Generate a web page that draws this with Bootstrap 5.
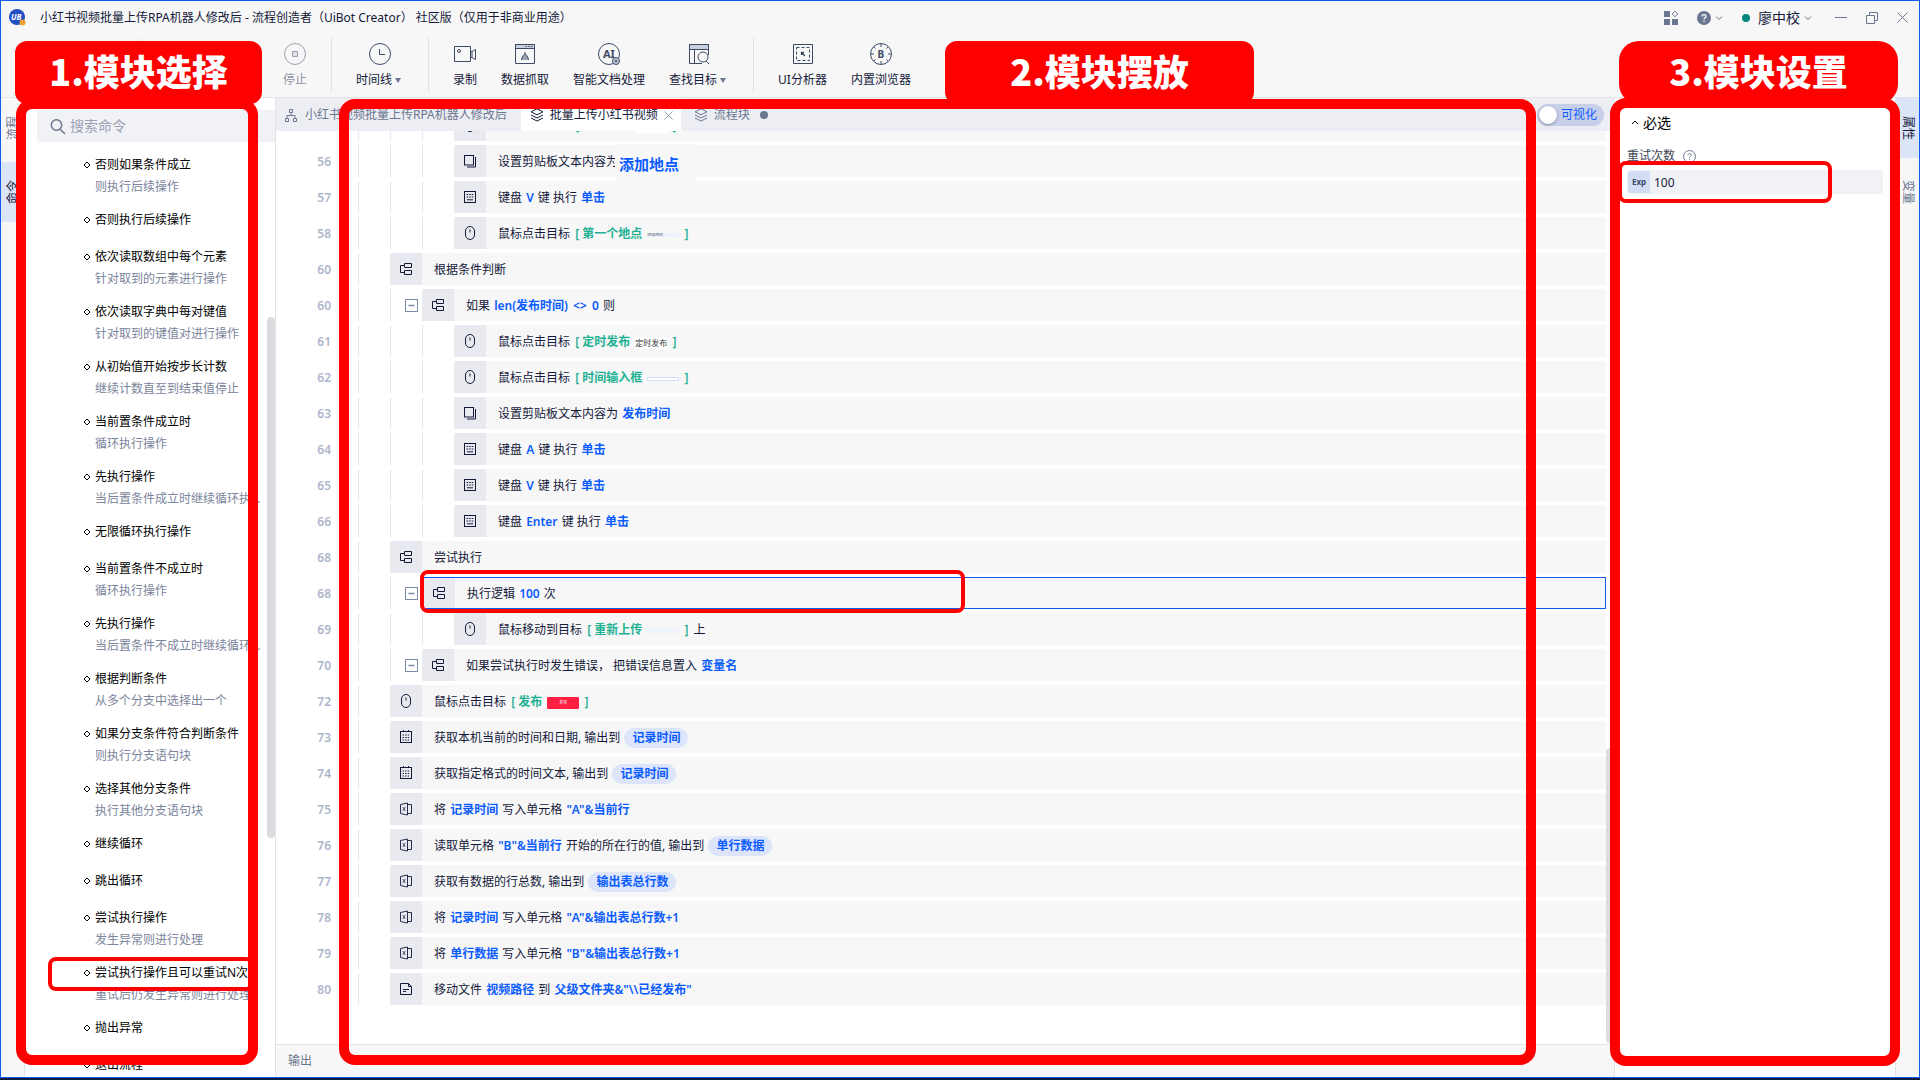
<!DOCTYPE html>
<html lang="zh-CN">
<head>
<meta charset="utf-8">
<meta name="viewport" content="width=device-width, initial-scale=1">
<title>流程创造者（UiBot Creator）</title>
<link href="https://cdn.jsdelivr.net/npm/bootstrap@5.3.0/dist/css/bootstrap.min.css" rel="stylesheet">
<style>
  :root { --ink:#14193a; --muted:#6b7690; --line:#e3e4ea; --pane:#f7f7f7; --blue:#0b5cff; --green:#1fb193; --mark:#ff0000; }
  body { font-family:"Noto Sans","Noto Sans CJK SC",sans-serif; font-size:12px; line-height:18px; color:var(--ink); background:#0b1b3d; padding-bottom:2px; overflow:hidden; }
  button { border:0; background:none; padding:0; color:inherit; font:inherit; }
  svg { display:block; flex:none; fill:none; stroke:currentColor; }
  .app-window { min-height:0; border:1px solid #0f5bea; background:var(--pane); }

  .title-bar { height:33px; padding:0 11px 0 8px; }
  .doc-title { padding-left:14px; }
  .title-bar .tools { color:#6b7690; gap:19px; }
  .user-name { font-size:14px; color:var(--ink); }
  .online { width:8px; height:8px; background:#00897b; }

  .tool-bar { height:64px; padding:0 24px 0 137px; gap:24px; border-bottom:1px solid var(--line); }
  .tool-bar button { padding-top:9px; display:flex; flex-direction:column; align-items:center; gap:6px; white-space:nowrap; }
  .tool-bar button svg { color:#3d4a66; }
  .tool-bar .stop-btn { margin-left:120px; color:#8f95a5; }
  .tool-bar .stop-btn svg { color:#9aa1b0; }
  .tool-sep { width:1px; height:54px; margin-top:4px; background:#e0e1e6; }
  .tri { display:inline-block; margin:0 3px 1px 3px; border:3px solid transparent; border-top:5px solid #6b7690; border-bottom:0; }

  .side-tabs { width:24px; gap:4px; background:var(--pane); color:#6b7690; }
  .side-tabs button { height:60px; writing-mode:vertical-rl; text-orientation:sideways; line-height:22px; text-align:center; }
  .side-tabs.at-left { border-right:1px solid var(--line); }
  .side-tabs.at-right { border-left:1px solid var(--line); }
  .side-tabs.at-left button { transform:rotate(180deg); }
  .side-tabs .on { background:#dce4f8; color:var(--ink); }

  .command-pane { width:251px; background:#fff; border-right:1px solid var(--line); }
  .search-row { padding:12px 12px 0; gap:14px; }
  .search-box { height:32px; padding:0 12px; gap:4px; background:#f1f2f6; border-radius:4px; color:#6b7690; }
  .search-box input { min-width:0; border:0; outline:0; padding:0; background:none; font-size:14px; color:var(--ink); }
  .search-box input::placeholder { color:#9ba2b2; opacity:1; }
  .command-list { margin:10px 12px 0 58px; padding:0; list-style:none; }
  .command-list li { padding-bottom:11px; }
  .command-list .name { line-height:26px; gap:4px; color:#000; white-space:nowrap; }
  .command-list .note { line-height:18px; padding-left:12px; color:#7a849b; overflow:hidden; text-overflow:ellipsis; white-space:nowrap; }
  .thumb { position:absolute; right:0; width:8px; border-radius:4px; background:#dadcdf; }
  .command-pane .thumb { top:219px; height:521px; }
  .steps .thumb { bottom:1px; height:295px; }

  .tab-strip { height:33px; background:#edeef3; color:#6b7690; }
  .tab-strip .file-tab { display:flex; align-items:center; gap:6px; padding:1px 8px 0 9px; white-space:nowrap; }
  .tab-strip .file-tab.root { padding-right:14px; gap:8px; }
  .tab-strip .file-tab.next { padding-left:13px; }
  .tab-strip .on { background:#fff; color:var(--ink); }
  .close-x { color:#8f98ad; }
  .view-switch { height:22px; width:67px; padding:0 7px 0 2px; margin:auto 10px auto auto; background:#c8cfe8; color:var(--blue); border-radius:11px; white-space:nowrap; }
  .view-switch input { appearance:none; width:18px; height:18px; margin:0; border-radius:50%; background:#fff; box-shadow:0 1px 3px rgba(60,70,110,.5); }

  .steps { background:#fff; }
  .step { display:flex; height:32px; margin:0 8px 4px 0; }
  .step.cut { height:10px; overflow:hidden; align-items:flex-end; }
  .step.cut > * { height:32px; }
  .line-no { flex:none; width:55px; margin-right:27px; line-height:34px; text-align:right; font-weight:600; color:#adb5cb; }
  .guide { flex:none; width:32px; border-left:1px solid #e6e7ed; display:flex; align-items:center; justify-content:flex-end; padding-right:4px; }
  .guide button { color:#7d8bab; }
  .cmd { flex:1 1 0; min-width:0; display:flex; align-items:center; background:var(--pane); white-space:nowrap; }
  .cmd > svg { width:32px; height:100%; padding:9px; background:#e9eaf0; margin-right:12px; }
  .cmd > span { padding-top:2px; }
  .cmd.picked { border:1px solid #0f5bea; }
  .cmd.picked > svg { padding:8px 9px; }
  .cmd b { color:var(--blue); font-weight:600; padding:0 1px; }
  .cmd em { color:var(--green); font-style:normal; font-weight:600; padding:0 2px; }
  .out-var { display:inline-block; margin-left:1px; padding:0 8px; line-height:20px; border-radius:10px; background:#dde5fc; color:var(--blue); font-weight:600; }
  .shot { display:inline-flex; align-items:center; justify-content:center; vertical-align:middle; width:32px; height:12px; margin:0 2px; font-size:8px; font-style:normal; line-height:12px; color:#333; background:#fff; overflow:hidden; }
  .shot.red { background:#ff1f42; color:#ffb3c0; font-size:4px; border-radius:1px; }
  .shot.faint { height:4px; background:#eef2fd; color:#8a8f9c; font-size:4px; justify-content:flex-start; }
  .shot.boxed { height:4px; border:1px solid #d5dbf7; }
  .retyped { position:absolute; left:339px; top:13px; width:81px; height:37px; padding-left:4px; line-height:40px; background:#f8f8f8; color:var(--blue); font-size:15px; font-weight:600; }

  .output-bar { height:33px; border-top:1px solid var(--line); padding:0 12px; color:#6b7690; }

  .props { width:281px; background:#fff; border-left:1px solid var(--line); padding:16px 12px 0; }
  .props h2 { margin:0; padding-left:4px; gap:4px; font-size:14px; line-height:18px; font-weight:400; color:#000; }
  .props label { margin-top:15px; gap:8px; color:#3d4254; }
  .props label svg { color:#6b7690; }
  .exp-field { height:24px; margin-top:5px; padding:1px; background:#f1f2f6; border-radius:3px; }
  .exp-field button { width:22px; height:22px; margin-right:4px; background:#d3ddf4; border-radius:3px 0 0 3px; font-size:8px; font-weight:700; line-height:20px; color:#3d4a66; }
  .exp-field input { min-width:0; border:0; outline:0; padding:1px 0 0; background:none; color:var(--ink); }

  .frame-mark { position:absolute; border:10px solid var(--mark); border-radius:16px; pointer-events:none; }
  .frame-mark.thin { border-width:4px; border-radius:8px; }
  .title-mark { position:absolute; top:41px; height:63px; border-radius:12px; background:var(--mark); color:#fff; font:900 36px/58px "Noto Sans CJK SC",sans-serif; text-align:center; white-space:nowrap; pointer-events:none; }
  .pick-title { left:15px; width:247px; }
  .place-title { right:666px; width:309px; }
  .setup-title { right:22px; width:279px; border-radius:20px; }
  .pick-frame { left:16px; top:99px; width:242px; bottom:15px; }
  .place-frame { left:339px; top:99px; right:384px; bottom:15px; }
  .setup-frame { right:20px; top:98px; width:290px; bottom:14px; }
  .retry-command { left:48px; top:957px; width:206px; height:34px; }
  .retry-step { left:420px; top:570px; width:545px; height:43px; }
  .retry-count { right:88px; top:161px; width:214px; height:42px; }
</style>
<script src="https://cdn.jsdelivr.net/npm/bootstrap@5.3.0/dist/js/bootstrap.bundle.min.js"></script>
</head>
<body class="vh-100 d-flex flex-column position-relative">

<svg width="0" height="0" class="position-absolute" aria-hidden="true">
  <symbol id="i-mouse" viewBox="0 0 14 14"><rect x="2.5" y=".5" width="9" height="13" rx="4.5"/><path d="M7 3.5v3"/></symbol>
  <symbol id="i-copy" viewBox="0 0 14 14"><rect x="1.5" y="1.5" width="9" height="9.5"/><path d="M12.5 3v10H4"/></symbol>
  <symbol id="i-keys" viewBox="0 0 14 14"><rect x="1.5" y="1.5" width="11" height="11"/><path d="M3.5 4.5h7M3.5 7h7" stroke-dasharray="1.6 1"/><path d="M4 9.8h6"/></symbol>
  <symbol id="i-flow" viewBox="0 0 14 14"><path d="M5.5 1.5h7v4h-7zM5.5 8.5h7v4h-7zM5 3.5H1.5v7H5"/></symbol>
  <symbol id="i-date" viewBox="0 0 14 14"><rect x="1.5" y="1.5" width="11" height="11"/><path d="M3.500 5h7M3.500 7.500h7M3.500 10h7" stroke-dasharray="1.400 1.200"/><path d="M4.500 0v2M9.500 0v2"/></symbol>
  <symbol id="i-sheet" viewBox="0 0 14 14"><path d="M1.500 2.500l7-1.500v12l-7-1.500zM8.500 2.500h4v9h-4" stroke-width=".9"/><path d="M3.700 5l2.600 4M6.300 5l-2.600 4" stroke-width=".7"/></symbol>
  <symbol id="i-file" viewBox="0 0 14 14"><path d="M1.500 1.500h8l3 3v8h-11zM9.500 1.500v3h3M4 7.500h6M4 9.500h3"/></symbol>
  <symbol id="i-fold" viewBox="0 0 13 13"><rect x=".5" y=".5" width="12" height="12"/><path d="M3.500 6.500h6" stroke-width="1.500"/></symbol>
  <symbol id="i-dia" viewBox="0 0 8 8"><path d="M4 1l3 3-3 3-3-3z"/></symbol>
  <symbol id="i-stack" viewBox="0 0 14 14"><path d="M7 .8l6 3-6 3-6-3zM1 7l6 3 6-3M1 10l6 3 6-3"/></symbol>
  <symbol id="i-down" viewBox="0 0 8 8"><path d="M1 2.500l3 3 3-3"/></symbol>
</svg>

<div class="app-window flex-grow-1 d-flex flex-column overflow-hidden">
  <header class="title-bar d-flex align-items-center flex-shrink-0">
    <svg width="17" height="17" viewBox="0 0 17 17"><circle cx="8" cy="8" r="8" fill="#234fc4" stroke="none"/><text x="2" y="11" font-size="8" font-weight="700" font-style="italic" fill="#fff" stroke="none">UB</text><circle cx="13.500" cy="13.500" r="3" fill="#f0a030" stroke="none"/></svg>
    <span class="doc-title flex-grow-1 text-truncate">小红书视频批量上传RPA机器人修改后 - 流程创造者（UiBot Creator） 社区版（仅用于非商业用途）</span>
    <div class="tools d-flex align-items-center flex-shrink-0">
      <button aria-label="应用"><svg width="14" height="14" viewBox="0 0 14 14"><path d="M0 0h6v6H0zM0 8h6v6H0zM8 8h6v6H8z" fill="currentColor" stroke="none"/><path d="M11 .2L13.800 3 11 5.800 8.200 3z"/></svg></button>
      <button class="d-flex align-items-center" aria-label="帮助"><svg width="14" height="14" viewBox="0 0 14 14"><circle cx="7" cy="7" r="7" fill="currentColor" stroke="none"/><path d="M5 5.500c0-2.600 4-2.600 4 0 0 1.500-2 1.300-2 3M7 9.700v1.300" stroke="#fff" stroke-width="1.300"/></svg><svg class="ms-1" width="8" height="8"><use href="#i-down"/></svg></button>
      <button class="d-flex align-items-center"><span class="online rounded-circle me-2"></span><span class="user-name me-1">廖中校</span><svg width="8" height="8"><use href="#i-down"/></svg></button>
      <button class="ms-1" aria-label="最小化"><svg width="12" height="12" viewBox="0 0 12 12"><path d="M0 5.500h12"/></svg></button>
      <button aria-label="还原"><svg width="12" height="12" viewBox="0 0 12 12"><path d="M.5 3.500h8v8h-8zM3.500 3V.5h8v8H9"/></svg></button>
      <button aria-label="关闭"><svg width="11" height="11" viewBox="0 0 11 11"><path d="M.5.5l10 10M10.500.5l-10 10"/></svg></button>
    </div>
  </header>

  <nav class="tool-bar d-flex flex-shrink-0">
    <span class="tool-sep"></span>
    <button class="stop-btn"><svg width="22" height="22" viewBox="0 0 22 22"><circle cx="11" cy="11" r="10.500"/><path d="M8.500 8.500h5v5h-5z" fill="#dfe2e8"/></svg>停止</button>
    <span class="tool-sep"></span>
    <button><svg width="22" height="22" viewBox="0 0 22 22"><circle cx="11" cy="11" r="10.500"/><path d="M10.500 6v5.500H16"/></svg><span>时间线<i class="tri"></i></span></button>
    <span class="tool-sep"></span>
    <button><svg width="22" height="22" viewBox="0 0 22 22"><path d="M.5 3.500h16v15H.5zM17 8.500h1l3.500-2v10l-3.500-2h-1"/><path d="M18 8.500v6"/><circle cx="5" cy="8" r="1.500"/></svg>录制</button>
    <button><svg width="22" height="22" viewBox="0 0 22 22"><path d="M1.500 1.500h19v4h-19z" fill="#c9d0de"/><path d="M1.500 1.500h19v19h-19zM11 9v8M11 11c-2 1-3 3-3.500 6M11 11c2 1 3 3 3.500 6M9 13v4M13 13v4"/><path d="M11.500 3.500h7" stroke-dasharray="1.500 1.200"/></svg>数据抓取</button>
    <button><svg width="22" height="22" viewBox="0 0 22 22"><circle cx="11" cy="11" r="10.500"/><text x="5" y="15" font-size="11" font-weight="700" fill="#3d4a66" stroke="none">AI</text><circle cx="18" cy="18" r="3.500" fill="#c9d0de"/><circle cx="18" cy="18" r="1"/></svg>智能文档处理</button>
    <button><svg width="22" height="22" viewBox="0 0 22 22"><path d="M1.500 1.500h19v5h-19z" fill="#c9d0de"/><path d="M20.500 12V1.500h-19v19H14M6.500 6.500v14"/><circle cx="15" cy="14" r="5" fill="#f7f7f7"/><path d="M18 18l3 3"/></svg><span>查找目标<i class="tri"></i></span></button>
    <span class="tool-sep"></span>
    <button><svg width="22" height="22" viewBox="0 0 22 22"><path d="M1.500 1.500h19v19h-19z"/><path d="M4.500 4.500h13v13h-13z" stroke-dasharray="3 2"/><path d="M9.500 12V9.500H12M9.500 9.500l3.500 3.500" stroke-width="1.300"/></svg>UI分析器</button>
    <button><svg width="22" height="22" viewBox="0 0 22 22"><circle cx="11" cy="11" r="10.500"/><path d="M11 1v3M11 18v3M1 11h3M18 11h3M4 4l1.500 1.500M18 4l-1.500 1.500M4 18l1.500-1.500M18 18l-1.500-1.500"/><text x="7.500" y="15" font-size="10" font-weight="700" fill="#3d4a66" stroke="none">B</text></svg>内置浏览器</button>
  </nav>

  <main class="flex-grow-1 d-flex overflow-hidden">
    <div class="side-tabs at-left d-flex flex-column flex-shrink-0">
      <button>流程</button><button class="on">命令</button>
    </div>

    <aside class="command-pane position-relative flex-shrink-0 overflow-hidden">
      <div class="search-row d-flex align-items-center">
        <div class="search-box flex-grow-1 d-flex align-items-center">
          <svg width="17" height="17" viewBox="0 0 17 17" stroke-width="1.500"><circle cx="7.500" cy="7" r="5.200"/><path d="M11 11l5 5"/></svg>
          <input class="flex-grow-1" type="search" placeholder="搜索命令" aria-label="搜索命令">
        </div>
        <button aria-label="折叠全部"><svg width="12" height="12" viewBox="0 0 12 12"><path d="M.5.5h11v11H.5zM6 4h3M6 6h3M6 8h3"/></svg></button>
      </div>
      <ul class="command-list">
        <li><div class="name d-flex align-items-center"><svg width="8" height="8"><use href="#i-dia"/></svg>否则如果条件成立</div><div class="note">则执行后续操作</div></li>
        <li><div class="name d-flex align-items-center"><svg width="8" height="8"><use href="#i-dia"/></svg>否则执行后续操作</div></li>
        <li><div class="name d-flex align-items-center"><svg width="8" height="8"><use href="#i-dia"/></svg>依次读取数组中每个元素</div><div class="note">针对取到的元素进行操作</div></li>
        <li><div class="name d-flex align-items-center"><svg width="8" height="8"><use href="#i-dia"/></svg>依次读取字典中每对键值</div><div class="note">针对取到的键值对进行操作</div></li>
        <li><div class="name d-flex align-items-center"><svg width="8" height="8"><use href="#i-dia"/></svg>从初始值开始按步长计数</div><div class="note">继续计数直至到结束值停止</div></li>
        <li><div class="name d-flex align-items-center"><svg width="8" height="8"><use href="#i-dia"/></svg>当前置条件成立时</div><div class="note">循环执行操作</div></li>
        <li><div class="name d-flex align-items-center"><svg width="8" height="8"><use href="#i-dia"/></svg>先执行操作</div><div class="note">当后置条件成立时继续循环执行操作</div></li>
        <li><div class="name d-flex align-items-center"><svg width="8" height="8"><use href="#i-dia"/></svg>无限循环执行操作</div></li>
        <li><div class="name d-flex align-items-center"><svg width="8" height="8"><use href="#i-dia"/></svg>当前置条件不成立时</div><div class="note">循环执行操作</div></li>
        <li><div class="name d-flex align-items-center"><svg width="8" height="8"><use href="#i-dia"/></svg>先执行操作</div><div class="note">当后置条件不成立时继续循环执行操作</div></li>
        <li><div class="name d-flex align-items-center"><svg width="8" height="8"><use href="#i-dia"/></svg>根据判断条件</div><div class="note">从多个分支中选择出一个</div></li>
        <li><div class="name d-flex align-items-center"><svg width="8" height="8"><use href="#i-dia"/></svg>如果分支条件符合判断条件</div><div class="note">则执行分支语句块</div></li>
        <li><div class="name d-flex align-items-center"><svg width="8" height="8"><use href="#i-dia"/></svg>选择其他分支条件</div><div class="note">执行其他分支语句块</div></li>
        <li><div class="name d-flex align-items-center"><svg width="8" height="8"><use href="#i-dia"/></svg>继续循环</div></li>
        <li><div class="name d-flex align-items-center"><svg width="8" height="8"><use href="#i-dia"/></svg>跳出循环</div></li>
        <li><div class="name d-flex align-items-center"><svg width="8" height="8"><use href="#i-dia"/></svg>尝试执行操作</div><div class="note">发生异常则进行处理</div></li>
        <li><div class="name d-flex align-items-center"><svg width="8" height="8"><use href="#i-dia"/></svg>尝试执行操作且可以重试N次</div><div class="note">重试后仍发生异常则进行处理</div></li>
        <li><div class="name d-flex align-items-center"><svg width="8" height="8"><use href="#i-dia"/></svg>抛出异常</div></li>
        <li><div class="name d-flex align-items-center"><svg width="8" height="8"><use href="#i-dia"/></svg>退出流程</div></li>
      </ul>
      <div class="thumb"></div>
    </aside>

    <section class="flex-grow-1 d-flex flex-column overflow-hidden">
      <div class="tab-strip d-flex flex-shrink-0">
        <a class="file-tab root text-reset text-decoration-none" href="#"><svg width="12" height="13" viewBox="0 0 12 13"><path d="M4.500.5h3v3h-3zM.5 9.500h3v3h-3zM8.500 9.500h3v3h-3zM6 4v2.500M2 9V6.500h8V9"/></svg>小红书视频批量上传RPA机器人修改后</a>
        <a class="file-tab on text-decoration-none" href="#"><svg width="14" height="14"><use href="#i-stack"/></svg>批量上传小红书视频<svg class="close-x" width="9" height="9" viewBox="0 0 9 9"><path d="M.5.5l8 8M8.500.5l-8 8"/></svg></a>
        <a class="file-tab next text-reset text-decoration-none" href="#"><svg width="14" height="14"><use href="#i-stack"/></svg>流程块<svg class="ms-1" width="8" height="8" viewBox="0 0 8 8"><circle cx="4" cy="4" r="4" fill="#6b7690" stroke="none"/></svg></a>
        <label class="view-switch d-flex align-items-center justify-content-between"><input type="checkbox" role="switch">可视化</label>
      </div>

      <div class="steps flex-grow-1 position-relative overflow-hidden">
        <div class="step cut"><span class="line-no"></span><span class="guide"></span><span class="guide"></span><span class="guide"></span><div class="cmd"><svg><use href="#i-mouse"/></svg><span>鼠标点击目标 <em>[ 添加地点 <i class="shot"></i> ]</em></span></div></div>
        <div class="step"><span class="line-no">56</span><span class="guide"></span><span class="guide"></span><span class="guide"></span><div class="cmd"><svg><use href="#i-copy"/></svg><span>设置剪贴板文本内容为</span></div></div>
        <div class="step"><span class="line-no">57</span><span class="guide"></span><span class="guide"></span><span class="guide"></span><div class="cmd"><svg><use href="#i-keys"/></svg><span>键盘 <b>V</b> 键 执行 <b>单击</b></span></div></div>
        <div class="step"><span class="line-no">58</span><span class="guide"></span><span class="guide"></span><span class="guide"></span><div class="cmd"><svg><use href="#i-mouse"/></svg><span>鼠标点击目标 <em>[ 第一个地点 <i class="shot faint">添加地点</i> ]</em></span></div></div>
        <div class="step"><span class="line-no">60</span><span class="guide"></span><div class="cmd"><svg><use href="#i-flow"/></svg><span>根据条件判断</span></div></div>
        <div class="step"><span class="line-no">60</span><span class="guide"></span><span class="guide"><button aria-label="折叠"><svg width="13" height="13"><use href="#i-fold"/></svg></button></span><div class="cmd"><svg><use href="#i-flow"/></svg><span>如果 <b>len(发布时间)</b> <b>&lt;&gt;</b> <b>0</b> 则</span></div></div>
        <div class="step"><span class="line-no">61</span><span class="guide"></span><span class="guide"></span><span class="guide"></span><div class="cmd"><svg><use href="#i-mouse"/></svg><span>鼠标点击目标 <em>[ 定时发布 <i class="shot fw-normal">定时发布</i> ]</em></span></div></div>
        <div class="step"><span class="line-no">62</span><span class="guide"></span><span class="guide"></span><span class="guide"></span><div class="cmd"><svg><use href="#i-mouse"/></svg><span>鼠标点击目标 <em>[ 时间输入框 <i class="shot boxed"></i> ]</em></span></div></div>
        <div class="step"><span class="line-no">63</span><span class="guide"></span><span class="guide"></span><span class="guide"></span><div class="cmd"><svg><use href="#i-copy"/></svg><span>设置剪贴板文本内容为 <b>发布时间</b></span></div></div>
        <div class="step"><span class="line-no">64</span><span class="guide"></span><span class="guide"></span><span class="guide"></span><div class="cmd"><svg><use href="#i-keys"/></svg><span>键盘 <b>A</b> 键 执行 <b>单击</b></span></div></div>
        <div class="step"><span class="line-no">65</span><span class="guide"></span><span class="guide"></span><span class="guide"></span><div class="cmd"><svg><use href="#i-keys"/></svg><span>键盘 <b>V</b> 键 执行 <b>单击</b></span></div></div>
        <div class="step"><span class="line-no">66</span><span class="guide"></span><span class="guide"></span><span class="guide"></span><div class="cmd"><svg><use href="#i-keys"/></svg><span>键盘 <b>Enter</b> 键 执行 <b>单击</b></span></div></div>
        <div class="step"><span class="line-no">68</span><span class="guide"></span><div class="cmd"><svg><use href="#i-flow"/></svg><span>尝试执行</span></div></div>
        <div class="step"><span class="line-no">68</span><span class="guide"></span><span class="guide"><button aria-label="折叠"><svg width="13" height="13"><use href="#i-fold"/></svg></button></span><div class="cmd picked"><svg><use href="#i-flow"/></svg><span>执行逻辑 <b>100</b> 次</span></div></div>
        <div class="step"><span class="line-no">69</span><span class="guide"></span><span class="guide"></span><span class="guide"></span><div class="cmd"><svg><use href="#i-mouse"/></svg><span>鼠标移动到目标 <em>[ 重新上传 <i class="shot faint"></i> ]</em> 上</span></div></div>
        <div class="step"><span class="line-no">70</span><span class="guide"></span><span class="guide"><button aria-label="折叠"><svg width="13" height="13"><use href="#i-fold"/></svg></button></span><div class="cmd"><svg><use href="#i-flow"/></svg><span>如果尝试执行时发生错误， 把错误信息置入 <b>变量名</b></span></div></div>
        <div class="step"><span class="line-no">72</span><span class="guide"></span><div class="cmd"><svg><use href="#i-mouse"/></svg><span>鼠标点击目标 <em>[ 发布 <i class="shot red">发布</i> ]</em></span></div></div>
        <div class="step"><span class="line-no">73</span><span class="guide"></span><div class="cmd"><svg><use href="#i-date"/></svg><span>获取本机当前的时间和日期, 输出到 <span class="out-var">记录时间</span></span></div></div>
        <div class="step"><span class="line-no">74</span><span class="guide"></span><div class="cmd"><svg><use href="#i-date"/></svg><span>获取指定格式的时间文本, 输出到 <span class="out-var">记录时间</span></span></div></div>
        <div class="step"><span class="line-no">75</span><span class="guide"></span><div class="cmd"><svg><use href="#i-sheet"/></svg><span>将 <b>记录时间</b> 写入单元格 <b>"A"&amp;当前行</b></span></div></div>
        <div class="step"><span class="line-no">76</span><span class="guide"></span><div class="cmd"><svg><use href="#i-sheet"/></svg><span>读取单元格 <b>"B"&amp;当前行</b> 开始的所在行的值, 输出到 <span class="out-var">单行数据</span></span></div></div>
        <div class="step"><span class="line-no">77</span><span class="guide"></span><div class="cmd"><svg><use href="#i-sheet"/></svg><span>获取有数据的行总数, 输出到 <span class="out-var">输出表总行数</span></span></div></div>
        <div class="step"><span class="line-no">78</span><span class="guide"></span><div class="cmd"><svg><use href="#i-sheet"/></svg><span>将 <b>记录时间</b> 写入单元格 <b>"A"&amp;输出表总行数+1</b></span></div></div>
        <div class="step"><span class="line-no">79</span><span class="guide"></span><div class="cmd"><svg><use href="#i-sheet"/></svg><span>将 <b>单行数据</b> 写入单元格 <b>"B"&amp;输出表总行数+1</b></span></div></div>
        <div class="step"><span class="line-no">80</span><span class="guide"></span><div class="cmd"><svg><use href="#i-file"/></svg><span>移动文件 <b>视频路径</b> 到 <b>父级文件夹&amp;"\\已经发布"</b></span></div></div>
        <div class="retyped">添加地点</div>
        <div class="thumb"></div>
      </div>

      <div class="output-bar d-flex align-items-center flex-shrink-0">输出</div>
    </section>

    <aside class="props flex-shrink-0">
      <h2 class="d-flex align-items-center"><svg width="8" height="8" viewBox="0 0 8 8"><path d="M1 5l3-3 3 3"/></svg>必选</h2>
      <label class="d-flex align-items-center" for="retry">重试次数<svg width="13" height="13" viewBox="0 0 13 13"><circle cx="6.500" cy="6.500" r="6"/><path d="M5 5.200c0-2.200 3.200-2.200 3.200 0 0 1.200-1.600 1.200-1.600 2.500M6.600 8.800v1"/></svg></label>
      <div class="exp-field d-flex align-items-center"><button>Exp</button><input id="retry" class="flex-grow-1" type="text" value="100"></div>
    </aside>

    <div class="side-tabs at-right d-flex flex-column flex-shrink-0">
      <button class="on">属性</button><button>变量</button>
    </div>
  </main>
</div>

<!-- Teaching marks over the window -->
<div class="frame-mark thin retry-command"></div>
<div class="frame-mark thin retry-step"></div>
<div class="frame-mark thin retry-count"></div>
<div class="frame-mark pick-frame"></div>
<div class="frame-mark place-frame"></div>
<div class="frame-mark setup-frame"></div>
<div class="title-mark pick-title">1.模块选择</div>
<div class="title-mark place-title">2.模块摆放</div>
<div class="title-mark setup-title">3.模块设置</div>
</body>
</html>
